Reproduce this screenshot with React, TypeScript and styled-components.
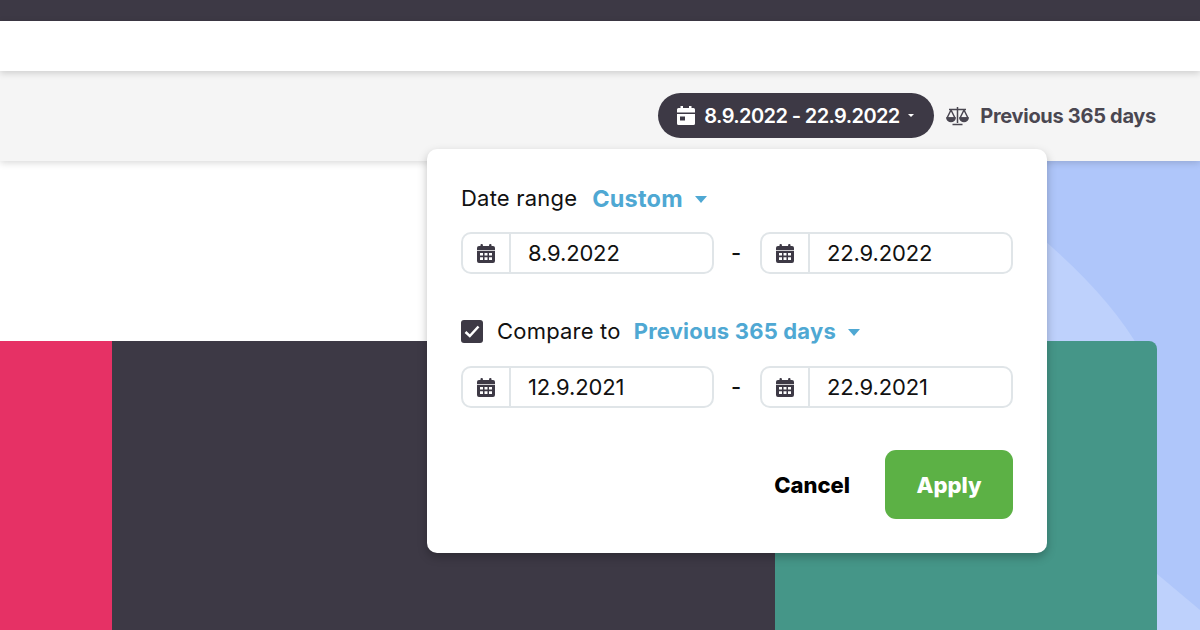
import React from 'react';
import styled, { createGlobalStyle } from 'styled-components';

const GlobalStyle = createGlobalStyle`
  html, body { margin: 0; padding: 0; background: #fff; }
  * { box-sizing: border-box; }
`;

const INK = '#3d3945';
const LINK = '#4fa8d3';

const Page = styled.div`
  position: relative;
  display: flex;
  flex-direction: column;
  width: 1200px;
  height: 630px;
  overflow: hidden;
  font-family: Inter, 'Noto Sans', sans-serif;
  color: #111;
`;

const TopBar = styled.div`
  height: 21px;
  flex: none;
  background: ${INK};
`;

const NavBar = styled.div`
  position: relative;
  z-index: 3;
  height: 50px;
  flex: none;
  background: #fff;
  box-shadow: 0 2px 7px rgba(0, 0, 0, 0.17);
`;

const Toolbar = styled.div`
  position: relative;
  z-index: 2;
  display: flex;
  align-items: center;
  justify-content: flex-end;
  height: 90px;
  flex: none;
  padding: 0 44px 1px 0;
  background: #f5f5f5;
  box-shadow: 0 2px 7px rgba(0, 0, 0, 0.15);
`;

const DatePill = styled.div`
  display: flex;
  align-items: center;
  height: 45px;
  width: 276px;
  padding-left: 19px;
  border-radius: 23px;
  background: ${INK};
  color: #fff;
  font-size: 20px;
  font-weight: 600;
  letter-spacing: -0.6px;
  white-space: nowrap;
`;

const PillText = styled.span`
  margin-left: 9px;
`;

const PillCaret = styled.span`
  width: 0;
  height: 0;
  margin-left: 8px;
  border-left: 3.5px solid transparent;
  border-right: 3.5px solid transparent;
  border-top: 3.5px solid #fff;
`;

const CompareLabel = styled.div`
  display: flex;
  align-items: center;
  gap: 11px;
  margin-left: 12px;
  color: #4a4751;
  font-size: 20px;
  font-weight: 700;
  letter-spacing: -0.3px;
  white-space: nowrap;
`;

const Stage = styled.div`
  position: relative;
  flex: 1;
  display: flex;
  flex-direction: column;
  justify-content: flex-end;
  background: #fff;
`;

const Backdrop = styled.svg`
  position: absolute;
  top: 0;
  right: 0;
`;

const Tiles = styled.div`
  position: relative;
  display: flex;
  height: 289px;
  padding-right: 43px;
`;

const PinkTile = styled.div`
  width: 112px;
  background: #e63165;
`;

const DarkTile = styled.div`
  width: 663px;
  background: ${INK};
`;

const TealTile = styled.div`
  flex: 1;
  border-top-right-radius: 8px;
  background: #459688;
`;

const Popup = styled.div`
  position: absolute;
  z-index: 4;
  top: 149px;
  left: 427px;
  display: flex;
  flex-direction: column;
  width: 620px;
  height: 404px;
  padding: 32px 34px 34px;
  border-radius: 10px;
  background: #fff;
  box-shadow: 0 4px 10px rgba(0, 0, 0, 0.25);
`;

const LabelRow = styled.div<{ $top?: number }>`
  display: flex;
  align-items: center;
  height: 34px;
  margin-top: ${(p) => p.$top ?? 0}px;
  font-size: 22px;
  letter-spacing: 0.2px;
`;

const Dropdown = styled.span<{ $gap: number; $size: number }>`
  display: flex;
  align-items: center;
  gap: 12px;
  margin-left: ${(p) => p.$gap}px;
  color: ${LINK};
  font-size: ${(p) => p.$size}px;
  font-weight: 700;
  letter-spacing: 0.2px;
`;

const Caret = styled.span`
  width: 0;
  height: 0;
  margin-top: 2px;
  border-left: 6.5px solid transparent;
  border-right: 6.5px solid transparent;
  border-top: 7px solid ${LINK};
`;

const Checkbox = styled.span`
  display: flex;
  align-items: center;
  justify-content: center;
  width: 22px;
  height: 23px;
  margin-right: 14px;
  border-radius: 3px;
  background: ${INK};
`;

const DateRow = styled.div<{ $top: number }>`
  display: flex;
  align-items: center;
  margin-top: ${(p) => p.$top}px;
`;

const DateField = styled.div`
  display: flex;
  width: 253px;
  height: 42px;
  border: 2px solid #e0e5e8;
  border-radius: 10px;
`;

const FieldAddon = styled.div`
  display: flex;
  align-items: center;
  justify-content: center;
  flex: none;
  width: 48px;
  border-right: 2px solid #e0e5e8;
`;

const FieldValue = styled.div`
  padding-left: 17px;
  font-size: 22px;
  line-height: 38px;
  letter-spacing: -0.15px;
`;

const Dash = styled.span`
  width: 46px;
  padding-right: 2px;
  text-align: center;
  font-size: 22px;
  font-weight: 500;
`;

const Actions = styled.div`
  display: flex;
  align-items: center;
  justify-content: flex-end;
  gap: 35px;
  margin-top: auto;
`;

const CancelButton = styled.span`
  color: #000;
  font-size: 22px;
  font-weight: 800;
`;

const ApplyButton = styled.span`
  display: flex;
  align-items: center;
  justify-content: center;
  width: 128px;
  height: 69px;
  border-radius: 11px;
  background: #5cb145;
  color: #fff;
  font-size: 22px;
  font-weight: 800;
`;

const GridCalendar = () => (
  <svg width="18" height="19" viewBox="0 0 18 19" fill={INK}>
    <rect x="3.5" y="0" width="2.4" height="4" rx="1" />
    <rect x="12.1" y="0" width="2.4" height="4" rx="1" />
    <path d="M2 2h14a2 2 0 0 1 2 2v2.300H0V4a2 2 0 0 1 2-2z" />
    <path
      fillRule="evenodd"
      d="M0 7h18V17a2 2 0 0 1-2 2H2a2 2 0 0 1-2-2zM3 9v2.500h3V9zm4.500 0v2.500h3V9zM12 9v2.500h3V9zM3 13.200v2.800h3v-2.800zm4.500 0v2.800h3v-2.800zM12 13.200v2.800h3v-2.800z"
    />
  </svg>
);

const PillCalendar = () => (
  <svg width="18" height="19" viewBox="0 0 18 19" fill="#fff">
    <rect x="3.500" y="0" width="2.500" height="4" />
    <rect x="12" y="0" width="2.500" height="4" />
    <path
      fillRule="evenodd"
      d="M1.500 2h15A1.500 1.500 0 0 1 18 3.500V17.500a1.500 1.500 0 0 1-1.500 1.500h-15A1.500 1.500 0 0 1 0 17.500V3.500A1.500 1.500 0 0 1 1.500 2zM0 6.500v1.500h18V6.500zM3 10.500v4h5v-4z"
    />
  </svg>
);

const ScaleIcon = () => (
  <svg width="23" height="20" viewBox="0 0 23 20" fill="none" stroke="#4a4751" strokeWidth="1.500">
    <path d="M11.500 1v16M6.500 18.500h10M3 3.500h17" />
    <path d="M5 4 1 12h8z" strokeLinejoin="round" />
    <path d="M18 4l-4 8h8z" strokeLinejoin="round" />
    <path d="M1 12a4 3.500 0 0 0 8 0zM14 12a4 3.500 0 0 0 8 0z" fill="#4a4751" />
  </svg>
);

const CheckMark = () => (
  <svg width="16" height="13" viewBox="0 0 16 13" fill="none" stroke="#fff" strokeWidth="2.500">
    <path d="M1.500 7 5.800 11 14.500 1.500" />
  </svg>
);

const DateInput = ({ value }: { value: string }) => (
  <DateField>
    <FieldAddon>
      <GridCalendar />
    </FieldAddon>
    <FieldValue>{value}</FieldValue>
  </DateField>
);

const App: React.FC = () => (
  <Page>
    <GlobalStyle />
    <TopBar />
    <NavBar />
    <Toolbar>
      <DatePill>
        <PillCalendar />
        <PillText>8.9.2022 - 22.9.2022</PillText>
        <PillCaret />
      </DatePill>
      <CompareLabel>
        <ScaleIcon />
        Previous 365 days
      </CompareLabel>
    </Toolbar>
    <Stage>
      <Backdrop width="500" height="469" viewBox="700 161 500 469">
        <rect x="700" y="161" width="500" height="469" fill="#afc6fa" />
        <path d="M700 175 H960 Q1095 270 1140 350 L1140 630 H700 Z" fill="#bed1fc" />
        <path d="M1150 568 L1200 610 V630 H1150 Z" fill="#bed1fc" />
      </Backdrop>
      <Tiles>
        <PinkTile />
        <DarkTile />
        <TealTile />
      </Tiles>
    </Stage>
    <Popup>
      <LabelRow>
        Date range
        <Dropdown $gap={15} $size={23.5}>
          Custom
          <Caret />
        </Dropdown>
      </LabelRow>
      <DateRow $top={17}>
        <DateInput value="8.9.2022" />
        <Dash>-</Dash>
        <DateInput value="22.9.2022" />
      </DateRow>
      <LabelRow $top={40}>
        <Checkbox>
          <CheckMark />
        </Checkbox>
        Compare to
        <Dropdown $gap={13} $size={22}>
          Previous 365 days
          <Caret />
        </Dropdown>
      </LabelRow>
      <DateRow $top={18}>
        <DateInput value="12.9.2021" />
        <Dash>-</Dash>
        <DateInput value="22.9.2021" />
      </DateRow>
      <Actions>
        <CancelButton>Cancel</CancelButton>
        <ApplyButton>Apply</ApplyButton>
      </Actions>
    </Popup>
  </Page>
);

export default App;
